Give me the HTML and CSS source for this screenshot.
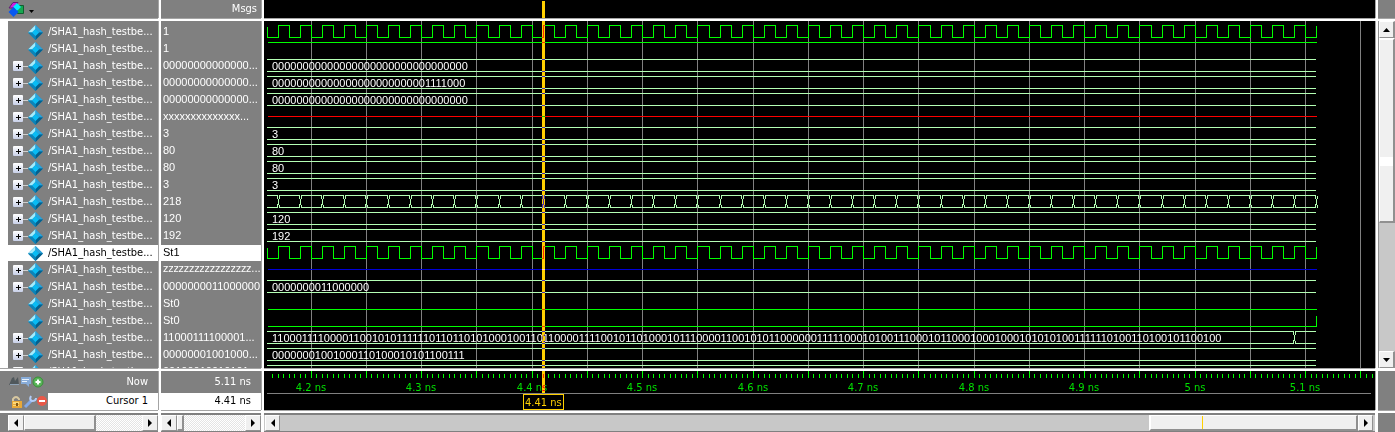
FILE: index.html
```html
<!DOCTYPE html>
<html lang="en">
<head>
<meta charset="utf-8">
<title>Wave</title>
<link rel="stylesheet" href="styles.css">
</head>
<body>
<svg class="defs" aria-hidden="true">
  <symbol id="diamond" viewBox="0 0 15 15">
    <path fill="#1088c4" d="M7.500 0 15 7.500 7.500 15 0 7.500z"/>
    <path fill="#a4ecfc" d="M7.500 0v4L4 7.500H0z"/>
    <path fill="#2ba4dc" d="M7.500 0 15 7.500h-4L7.500 4z"/>
    <path fill="#04608c" d="M15 7.500 7.500 15v-4L11 7.500z"/>
    <path fill="#0c84b8" d="M0 7.500 7.500 15v-4L4 7.500z"/>
    <path fill="#08bcf4" d="M7.500 4 11 7.500 7.500 11 4 7.500z"/>
  </symbol>
</svg>
<main class="wave">
  <header class="cell head">
    <button class="menu" aria-label="Objects">
      <svg width="18" height="16" viewBox="0 0 18 16">
        <path fill="#d020e0" stroke="#602070" d="M5 1.500h5L7 7H1z"/>
        <path fill="#18a850" stroke="#106030" d="M9.500 4.500h6v8h-6z"/>
        <path fill="#00f0ff" d="m9 2 4 4-4 4-4-4z"/>
        <path fill="#0858f0" d="m5.500 6 5 5-5 5-5-5z"/>
      </svg>
      <svg width="5" height="16" viewBox="0 0 5 16"><path d="M0 9h5L2.500 12z"/></svg>
    </button>
  </header>
  <div class="cell head right">Msgs</div>
  <div class="cell black"><i class="cursor header-cursor"></i></div>
  <div class="cell"></div>

  <section class="cell names"><ul class="rows" id="names"></ul></section>
  <section class="cell values"><ul class="rows" id="values"></ul></section>
  <section class="cell black">
    <svg class="plot" id="plot" shape-rendering="crispEdges"></svg>
    <ul class="rows traces" id="traces"></ul>
    <i class="cursor"></i>
  </section>
  <div class="scroll vertical">
    <button class="arrow" aria-label="Up"><svg width="7" height="4"><path d="M3.500 0 7 4H0z"/></svg></button>
    <div class="thumb long"><i class="notch"></i></div>
    <div class="trough"></div>
    <button class="arrow" aria-label="Down"><svg width="7" height="4"><path d="M0 0h7L3.500 4z"/></svg></button>
  </div>

  <div class="cell foot">
    <div class="line">
      <svg width="35" height="14" viewBox="0 0 35 14">
        <path fill="#50585c" d="m0 10 3-7 2-1 1 4 3-4 1 8z"/><path fill="#90a4b8" d="M1 9h9v1H1z"/>
        <path fill="#88acd8" d="M12 2h10v7h-2v3l-3-3h-5z"/><path stroke="#e8f2fc" d="M13 4.500h7M13 6.500h5"/>
        <circle cx="29" cy="7" r="5" fill="#58b458" stroke="#389038"/><path stroke="#fff" stroke-width="2" d="M26.500 7h5M29 4.500v5"/>
      </svg>
      <span>Now</span>
    </div>
    <div class="line">
      <svg width="38" height="14" viewBox="0 0 38 14">
        <path fill="none" stroke="#d8c8a0" stroke-width="2" d="M4 7V4q3-4 6 0v1"/><path fill="#e8a838" d="M3 6h10v7H3z"/><path fill="#fcd878" d="M4 7h6v2H4zM4 10h6v1H4z"/><path fill="#805818" d="M7 8h2v3H7z"/>
        <path stroke="#80a8e8" stroke-width="3" d="m16 12 7-7"/><path fill="none" stroke="#b0ccf8" stroke-width="2" d="M22 1q-2 4 1 5 4 0 4-3"/>
        <circle cx="33" cy="6" r="5" fill="#e85848"/><path stroke="#fff" stroke-width="2" d="M30 6h6"/>
      </svg>
      <span class="lit">Cursor 1</span>
    </div>
  </div>
  <div class="cell foot">
    <div class="line"><span>5.11 ns</span></div>
    <div class="line"><span class="lit">4.41 ns</span></div>
  </div>
  <section class="cell black">
    <svg class="plot" id="ruler" shape-rendering="crispEdges"></svg>
    <i class="cursor ruler-cursor"></i>
    <output class="stamp">4.41 ns</output>
  </section>
  <div class="cell"></div>

  <div class="scroll names-scroll">
    <button class="arrow" aria-label="Left"><svg width="4" height="8"><path d="M4 0v8L0 4z"/></svg></button>
    <div class="thumb"></div><div class="trough dither"></div>
    <button class="arrow" aria-label="Right"><svg width="4" height="8"><path d="M0 0v8l4-4z"/></svg></button>
  </div>
  <div class="scroll values-scroll">
    <button class="arrow" aria-label="Left"><svg width="4" height="8"><path d="M4 0v8L0 4z"/></svg></button>
    <div class="thumb"></div><div class="trough dither"></div>
    <button class="arrow" aria-label="Right"><svg width="4" height="8"><path d="M0 0v8l4-4z"/></svg></button>
  </div>
  <div class="scroll wave-scroll">
    <button class="arrow" aria-label="Left"><svg width="4" height="8"><path d="M4 0v8L0 4z"/></svg></button>
    <div class="trough"></div><div class="thumb"><i class="mark"></i></div>
    <button class="arrow" aria-label="Right"><svg width="4" height="8"><path d="M0 0v8l4-4z"/></svg></button>
  </div>
  <div class="cell"></div>
</main>
<script src="wave.js"></script>
</body>
</html>
```
FILE: styles.css
```css
* { box-sizing: border-box; }
body { margin: 0; background: #fff; color: #fff; font: 11px/16px "DejaVu Sans Condensed", "DejaVu Sans", sans-serif; }
button { padding: 0; border: 0; background: none; font: inherit; }
svg { display: block; flex: none; }
.defs { position: absolute; width: 0; height: 0; }
.wave { display: grid; grid-template-columns: 158px 100px minmax(0, 1fr) 17px; grid-template-rows: 18px minmax(0, 1fr) 39px 19px; gap: 3px; height: 100vh; overflow: hidden; }
.cell { position: relative; overflow: clip; overflow-clip-margin: 1px; background: #808080; box-shadow: 1px 0 #a4a4a4, 0 1px #a4a4a4; min-width: 0; }
.black { background: #000; }
.head { display: flex; align-items: center; }
.head.right { justify-content: flex-end; padding-right: 4px; }
.menu { display: flex; gap: 3px; margin-left: 8px; }
.names { border-left: 8px solid #fff; overflow: hidden; }
.values, section.black { overflow: hidden; }
.rows { margin: 0; padding: 3px 0 0; list-style: none; }
.rows li { display: flex; align-items: center; height: 17px; padding-bottom: 1px; white-space: pre; }
.rows .selected { background: #fff content-box; color: #000; }
.names li { gap: 5px; }
.names .node { display: flex; align-items: center; justify-content: flex-end; width: 35px; }
.plus { display: flex; align-items: center; justify-content: center; width: 10px; height: 10px; border-radius: 1px; background: linear-gradient(#fff, #c8d0e8); }
.link { width: 5px; height: 1px; background: #d0d0d0; }
.values, .traces { font-family: "Liberation Sans", Arial, sans-serif; }
.values li { line-height: 14px; text-indent: 2px; align-items: stretch; }
.values .condensed { font-family: "DejaVu Sans Condensed", sans-serif; }
.traces { position: relative; }
.traces li { padding: 0 0 1px 8px; }
.plot { position: absolute; inset: 0; width: 100%; height: 100%; }
.grid { stroke: #808080; }
.logic { stroke: #00ff00; fill: none; }
.bus { stroke: #b4ffb4; fill: none; }
.unknown { stroke: #ff0000; }
.floating { stroke: #0000d8; }
.ruler-text { fill: #00e000; text-anchor: middle; }
.cursor { position: absolute; left: 278px; top: 0; bottom: 0; width: 3px; background: #ffd000; mix-blend-mode: difference; }
.header-cursor { top: 1px; }
.ruler-cursor { bottom: 17px; }
.stamp { position: absolute; left: 259px; bottom: 0; height: 16px; padding: 0 1px; border: 1px solid #ffd000; line-height: 15px; color: #ffd000; }
.foot { display: grid; grid-template-rows: 22px 17px; }
.line { display: flex; align-items: center; }
.line svg { margin-left: 9px; }
.line span { flex: 1; padding-right: 10px; text-align: right; }
.line .lit { align-self: stretch; margin-left: 1px; background: #fff; color: #000; }
.line .lit:only-child { margin-left: 0; }
.scroll { display: flex; min-width: 0; background: #c8c8c8; border-top: 2px solid #808080; border-bottom: 1px solid #808080; }
.arrow { display: flex; flex: none; align-items: center; justify-content: center; width: 16px; height: 16px; background: #f0f0f0; border: 1px solid #fff; border-right-color: #909090; border-bottom-color: #909090; }
.thumb { position: relative; flex: none; background: #f0f0f0; border: 1px solid #fff; border-right: 2px solid #909090; border-bottom: 2px solid #909090; }
.trough { flex: 1; }
.dither { background: repeating-conic-gradient(#fff 0 25%, #e4e4e4 0 50%) 0 0 / 2px 2px; }
.names-scroll { border-left: 8px solid #808080; }
.names-scroll .thumb { width: 72px; }
.values-scroll .thumb { width: 7px; }
.wave-scroll { padding: 0 2px 0 1px; }
.wave-scroll .arrow { width: 15px; }
.wave-scroll .thumb { width: 209px; border-left-width: 2px; }
.mark { position: absolute; left: 51px; top: 0; bottom: 0; width: 1px; background: #ffd000; }
.vertical { flex-direction: column; border: 0; border-left: 1px solid #909090; }
.vertical .arrow { height: 17px; border-right-width: 2px; }
.vertical .thumb { height: 185px; }
.long { border-top-width: 2px; }
.notch { position: absolute; left: 0; right: 0; top: 117px; height: 9px; background: #fff; }
```
FILE: wave.js
```js
const digest =
  "110001111000011001010111111011011010100010011011" +
  "0000111100101101000101110000110010101" +
  "100000011111000101001110001011000100010001010101001111110100110100101100100";

// [value shown, trace kind, text on the trace, transition times]
const clockEdges = [];
for (let k = 0; k < 95; k++) clockEdges.push(4.17 + k * 0.01);
const signals = [
  ["1", "clock"],
  ["1", "high"],
  ["00000000000000...", "bus", "0".repeat(32)],
  ["00000000000000...", "bus", "0".repeat(25) + "1111000"],
  ["00000000000000...", "bus", "0".repeat(32)],
  ["xxxxxxxxxxxxxx...", "unknown"],
  ["3", "bus", "3"],
  ["80", "bus", "80"],
  ["80", "bus", "80"],
  ["3", "bus", "3"],
  ["218", "bus", "", clockEdges.filter((t, i) => i % 2 === 0)],
  ["120", "bus", "120"],
  ["192", "bus", "192"],
  ["St1", "clock"],
  ["zzzzzzzzzzzzzzzzz...", "floating"],
  ["0000000011000000", "bus", "0000000011000000"],
  ["St0", "low"],
  ["St0", "pulse"],
  ["11000111100001...", "bus", digest, [5.09]],
  ["00000001001000...", "bus", "00000001001000110100010101100111"],
  ["00100010010101...", "bus"]
];
const busKinds = ["bus", "unknown", "floating"];
const x = t => Math.round(46.71 + (t - 4.2) * 1105) + 0.5;
const start = 3, end = x(5.11);

function path(cls, d) { return `<path class="${cls}" d="${d}"/>`; }

function trace([, kind, , changes = []], row) {
  const hi = 4.5 + row * 17, lo = hi + 12, mid = hi + 6;
  if (kind === "high") return path("logic", `M${start + 1} ${hi}H${end}`);
  if (kind === "low") return path("logic", `M${start + 1} ${lo}H${end}`);
  if (kind === "pulse") return path("logic", `M${start + 1} ${lo}H${end}V${hi + 1}`);
  if (kind === "unknown" || kind === "floating") return path(kind, `M${start + 1} ${mid}H${end}`);
  if (kind === "clock") {
    let d = `M3.5 ${hi + 1}V${lo}`;
    clockEdges.forEach((t, i) => { d += `H${x(t)}V${i % 2 ? lo : hi}`; });
    return path("logic", d);
  }
  let d = "", from = start;
  for (const t of changes) {
    const c = x(t);
    d += `M${from} ${hi}H${c - 1}v3.5M${c - 1} ${lo}v-3.5M${from} ${lo}H${c - 1}`;
    d += `M${c} ${hi + 3}v6.5M${c + 1} ${hi}v3M${c + 1} ${lo}v-3`;
    from = c + 0.5;
  }
  if (from < end - 2) d += `M${from} ${hi}H${end - 0.5}M${from} ${lo}H${end - 0.5}`;
  return path("bus", d);
}

let grid = "";
for (let k = 0; k < 20; k++) grid += `M${x(4.2 + k * 0.05)} 0V1200`;
document.getElementById("plot").innerHTML = path("grid", grid) + signals.map(trace).join("");

const list = (id, render) => {
  document.getElementById(id).innerHTML = signals.map((s, i) =>
    `<li${i === 13 && id !== "traces" ? ' class="selected"' : ""}>${render(s)}</li>`).join("");
};
list("names", ([, kind]) => {
  const plus = busKinds.includes(kind)
    ? `<button class="plus" aria-label="Expand"><svg width="5" height="5" shape-rendering="crispEdges"><path d="M0 2h5v1H0zM2 0h1v5H2z"/></svg></button><i class="link"></i>`
    : "";
  return `<span class="node">${plus}<svg width="15" height="15"><use href="#diamond"/></svg></span><span>/SHA1_hash_testbe...</span>`;
});
list("values", ([value, kind]) => kind === "floating" ? `<span class="condensed">${value}</span>` : value);
list("traces", ([, , text = ""]) => text);

let minor = "", major = "", labels = "";
for (let k = -7; k <= 192; k++) {
  const t = 4.2 + k * 0.005;
  if (k % 10) minor += `M${x(t)} 3v4`;
  else major += `M${x(t)} 0v7`;
  if (k % 20 === 0 && k < 190) labels += `<text class="ruler-text" x="${Math.floor(x(t))}" y="20">${+t.toFixed(1)} ns</text>`;
}
document.getElementById("ruler").innerHTML =
  path("logic", minor + major) + path("grid", "M3 22.5H1107") + labels;
```
